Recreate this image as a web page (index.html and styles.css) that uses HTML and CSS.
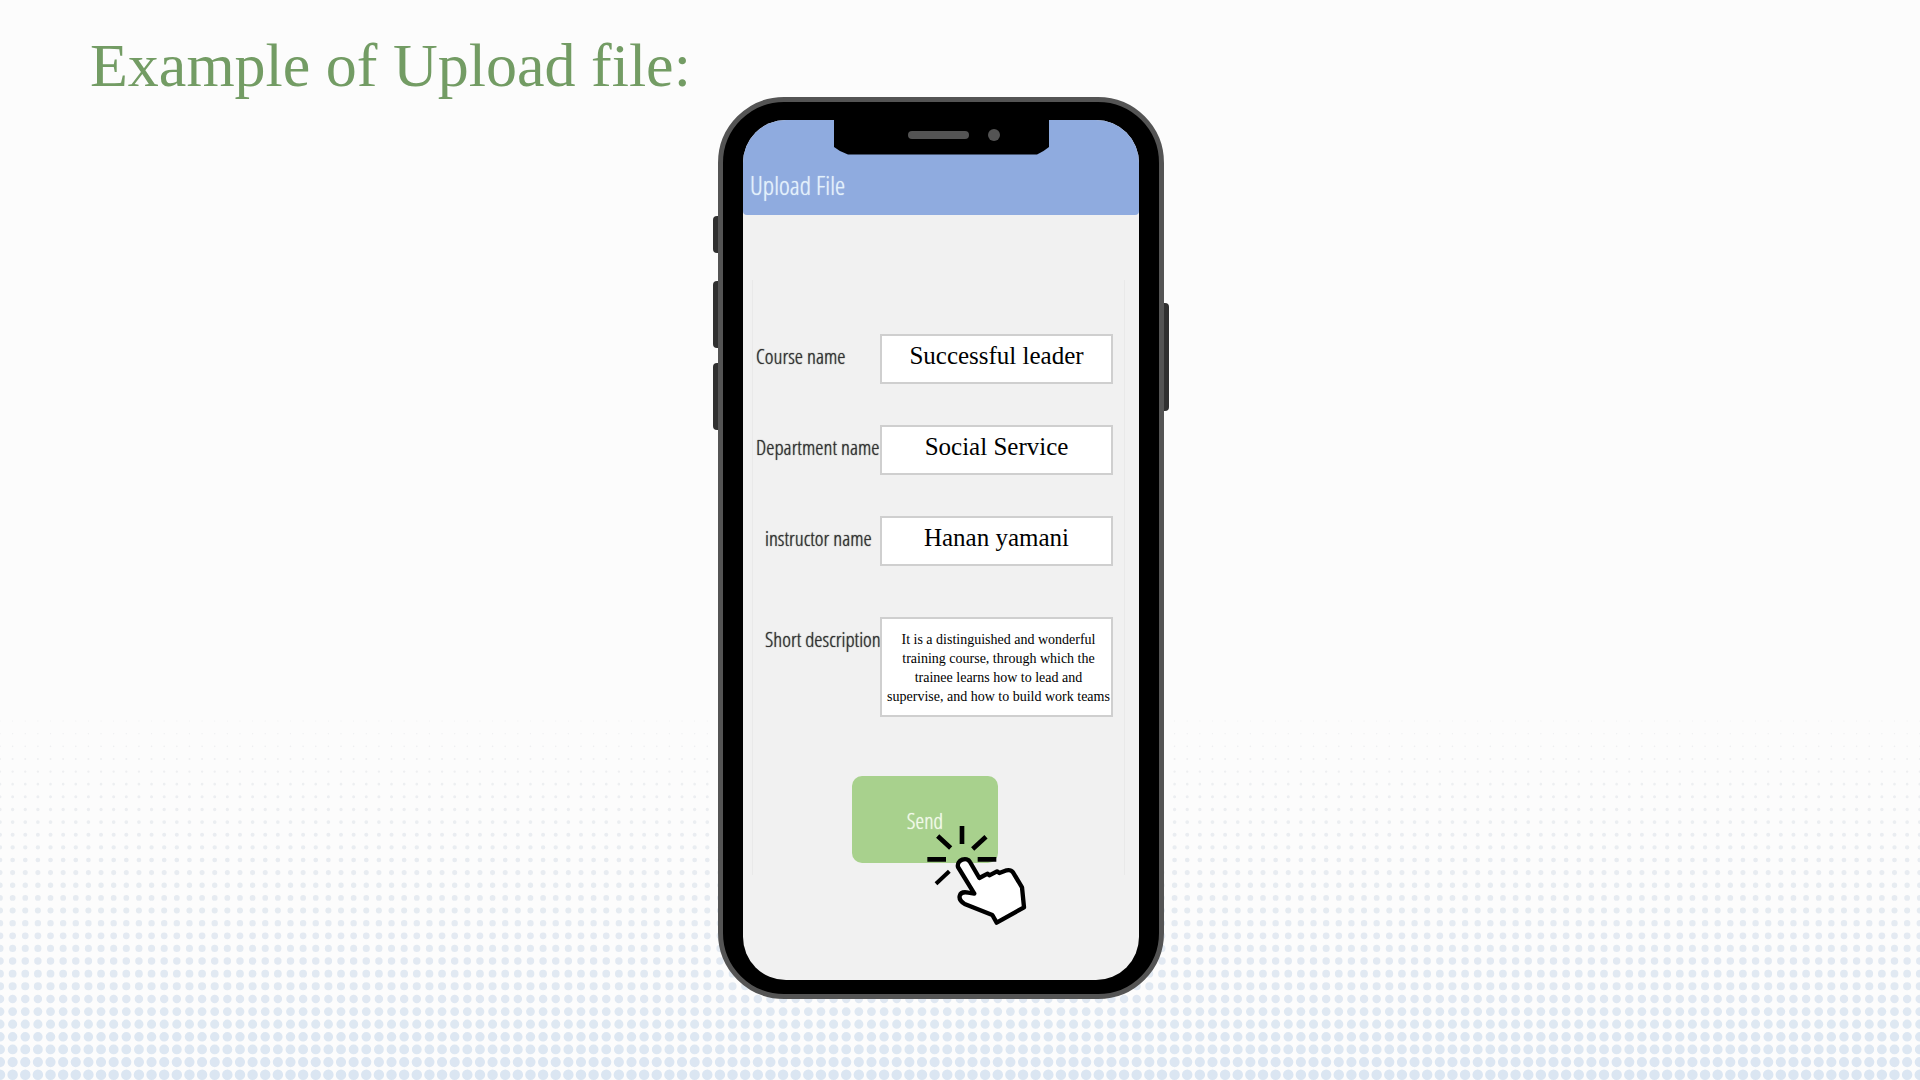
FILE: index.html
```html
<!DOCTYPE html>
<html lang="en">
<head>
  <meta charset="utf-8">
  <meta name="viewport" content="width=device-width, initial-scale=1">
  <title>Example of Upload file</title>
  <link rel="stylesheet" href="styles.css">
</head>
<body>
  <svg class="halftone" id="halftone" viewBox="0 0 1920 380" preserveAspectRatio="xMinYMax slice" aria-hidden="true"></svg>

  <header class="page-header">
    <h1 class="page-title">Example of Upload file:</h1>
  </header>

  <main class="stage">
    <div class="phone">
      <span class="side-key side-key-mute"></span>
      <span class="side-key side-key-up"></span>
      <span class="side-key side-key-down"></span>
      <span class="side-key side-key-power"></span>

      <div class="screen">
        <svg class="notch" viewBox="0 0 215 35" aria-hidden="true">
          <path d="M0 0H215V27Q209 32 203 34.500H14Q6 32 0 27Z" fill="#000"/>
          <rect x="74" y="11" width="61" height="8" rx="4" fill="#545454"/>
          <circle cx="160" cy="15" r="6" fill="#545454"/>
        </svg>

        <div class="app-bar">
          <h2 class="app-title">Upload File</h2>
        </div>

        <form class="upload-form">
          <div class="field">
            <label class="label" for="course">Course name</label>
            <input class="input" id="course" type="text" value="Successful leader">
          </div>
          <div class="field">
            <label class="label" for="department">Department name</label>
            <input class="input" id="department" type="text" value="Social Service">
          </div>
          <div class="field">
            <label class="label label-inset" for="instructor">instructor name</label>
            <input class="input" id="instructor" type="text" value="Hanan yamani">
          </div>
          <div class="field field-long">
            <label class="label label-inset" for="description">Short description</label>
            <textarea class="input textarea" id="description">It is a distinguished and wonderful
training course, through which the
trainee learns how to lead and
supervise, and how to build work teams</textarea>
          </div>
          <div class="actions">
            <button class="send" type="button">Send</button>
            <svg class="pointer" viewBox="80 45 300 300" aria-hidden="true">
              <g fill="none" stroke="#000" stroke-width="14">
                <path d="M185 48V102M81 148H137M232 148H288M112 78L151 114M257 80L217 117"/>
                <path stroke-width="12" d="M147 184L107 221"/>
              </g>
              <path d="M173 171C168 149 200 139 209 156L237 204L262 191L267 196L290 184L297 189L319 181Q332 179 338 187L365 232L371 292L289 338L276 315L193 282C169 267 174 242 204 248L222 251Z" fill="#fff" stroke="#000" stroke-width="13" stroke-linejoin="round"/>
            </svg>
          </div>
        </form>
      </div>
    </div>
  </main>
  <script src="halftone.js"></script>
</body>
</html>
```
FILE: styles.css
```css
* {
  box-sizing: border-box;
}

body {
  position: relative;
  min-height: 100vh;
  margin: 0;
  background: #fcfcfc;
  font-family: "Liberation Serif", serif;
  color: #000;
}

.halftone {
  position: absolute;
  left: 0;
  bottom: 0;
  z-index: -1;
  width: 100%;
  height: 380px;
}

.page-header {
  padding: 29px 90px 0;
  height: 97px;
}

.page-title {
  margin: 0;
  font-size: 62px;
  line-height: 72px;
  font-weight: 400;
  color: #739c64;
}

.stage {
  display: flex;
  justify-content: center;
  padding: 0 38px 80px 0;
}

/* Phone */

.phone {
  position: relative;
  width: 446px;
  padding: 18px 20px 14px;
  border: 5px solid #545454;
  border-radius: 66px;
  background: #000;
}

.side-key {
  position: absolute;
  left: -10px;
  width: 5px;
  border-radius: 4px 0 0 4px;
  background: #303030;
}

.side-key-mute {
  top: 114px;
  height: 37px;
}

.side-key-up {
  top: 179px;
  height: 67px;
}

.side-key-down {
  top: 261px;
  height: 67px;
}

.side-key-power {
  left: auto;
  right: -10px;
  top: 201px;
  height: 108px;
  border-radius: 0 4px 4px 0;
}

.screen {
  position: relative;
  padding-bottom: 105px;
  border-radius: 43px;
  background: #f1f1f1;
  overflow: hidden;
}

.notch {
  position: absolute;
  top: 0;
  left: 91px;
  width: 215px;
  height: 35px;
}

.app-bar {
  display: flex;
  align-items: flex-end;
  height: 95px;
  padding: 0 7px 10px;
  border-radius: 0 0 4px 4px;
  background: #8fabdf;
}

.app-title,
.label,
.send {
  font-family: "Open Sans Condensed Light", "Roboto Condensed", "Noto Sans", sans-serif;
  font-weight: 400;
  text-shadow: 0 0 1px currentColor;
}

.app-title {
  margin: 0;
  font-size: 26px;
  line-height: 40px;
  color: #e4f1fb;
}

/* Form */

.upload-form {
  display: flex;
  flex-direction: column;
  gap: 41px;
  margin: 65px 14px 0 9px;
  padding: 54px 11px 12px 0;
  border: solid #e9e9e9;
  border-width: 0 1px;
}

.field {
  display: grid;
  grid-template-columns: 127px 1fr;
}

.field-long {
  margin-top: 10px;
}

.label {
  padding: 10px 0 0 3px;
  font-size: 21px;
  line-height: 24px;
  white-space: nowrap;
  color: #303030;
}

.label-inset {
  padding-left: 12px;
}

.input {
  width: 100%;
  height: 50px;
  margin: 0;
  padding: 0 0 6px;
  border: 2px solid #cfcfcf;
  border-radius: 0;
  background: #fff;
  font-family: inherit;
  font-size: 25px;
  color: #000;
  text-align: center;
  outline: none;
}

.textarea {
  display: block;
  height: 100px;
  padding: 11px 0 0 4px;
  font-size: 14px;
  line-height: 19px;
  white-space: pre;
  resize: none;
  overflow: hidden;
}

.actions {
  position: relative;
  align-self: flex-start;
  margin: 18px 0 0 99px;
}

.send {
  display: block;
  width: 146px;
  height: 87px;
  padding: 0;
  border: 0;
  border-radius: 10px;
  background: #a8d18d;
  font-size: 22px;
  color: #f2faea;
}

.pointer {
  position: absolute;
  top: 49px;
  left: 75px;
  width: 100px;
  height: 100px;
}
```
FILE: halftone.js
```js
// Rows of dots that shrink and fade as they rise from the bottom edge.
const svg = document.getElementById("halftone");
const pitch = 12.63;
const rows = 29;

function mix(from, to, t) {
  return Math.round(from + (to - from) * t);
}

for (let i = 0; i < rows; i++) {
  const t = Math.min(1, i / 24);
  const y = 374.7 - i * pitch;
  const line = document.createElementNS("http://www.w3.org/2000/svg", "line");
  line.setAttribute("x1", 0);
  line.setAttribute("x2", 1920);
  line.setAttribute("y1", y);
  line.setAttribute("y2", y);
  line.setAttribute("stroke", `rgb(${mix(219, 238, t)},${mix(230, 239, t)},${mix(242, 241, t)})`);
  line.setAttribute("stroke-width", 10.5 - i * 0.34);
  line.setAttribute("stroke-linecap", "round");
  line.setAttribute("stroke-dasharray", `0 ${pitch}`);
  svg.appendChild(line);
}
```
